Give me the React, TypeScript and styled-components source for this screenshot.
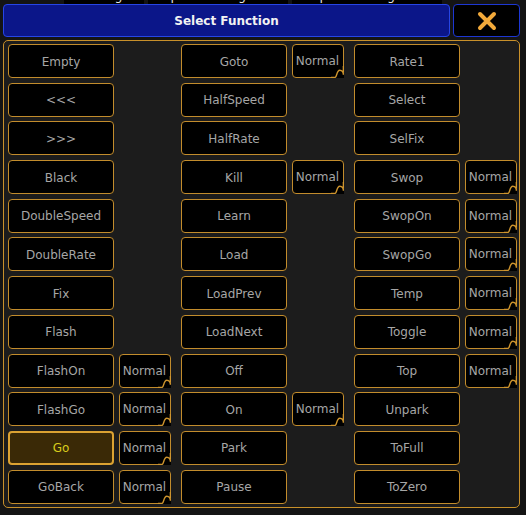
import { Fragment } from "react"
import styled, { createGlobalStyle, css } from "styled-components"

const GlobalStyle = createGlobalStyle`
  html, body {
    margin: 0;
    padding: 0;
    background: #141414;
  }
  body {
    font-family: "DejaVu Sans", Verdana, sans-serif;
  }
`

// hinter dem Dialog: abgeschnittene Kopfzeile der Seite
const Backdrop = styled.div`
  position: relative;
  width: 526px;
  height: 515px;
  overflow: hidden;
  background: #141414;
`

const HeaderStrip = styled.div`
  display: flex;
  gap: 4px;
  height: 4px;
  padding-left: 64px;
  overflow: hidden;
  align-items: flex-end;
`

const HeaderCell = styled.div<{ $w: number }>`
  width: ${(p) => p.$w}px;
  height: 14px;
  flex: none;
  background: #000;
  color: #e8e8e8;
  font-size: 12px;
  line-height: 12px;
  text-align: center;
  white-space: nowrap;
  overflow: hidden;
`

const Dialog = styled.div`
  position: absolute;
  left: 3px;
  top: 4px;
  width: 517px;
  display: flex;
  flex-direction: column;
  gap: 3px;
`

const TitleRow = styled.div`
  display: flex;
  gap: 3px;
  height: 33px;
`

const TitleBar = styled.div`
  flex: 1;
  background: #0b1689;
  border: 1px solid #2645e6;
  border-radius: 4px;
  color: #f2f2f2;
  font-weight: bold;
  font-size: 12px;
  display: flex;
  align-items: center;
  justify-content: center;
`

const CloseButton = styled.div`
  width: 65px;
  background: #000;
  border: 1px solid #1d37d4;
  border-radius: 4px;
  display: flex;
  align-items: center;
  justify-content: center;
`

const Body = styled.div`
  height: 468px;
  box-sizing: border-box;
  background: #1c1c1c;
  border: 1px solid #c8902a;
  border-radius: 5px;
  padding: 3px 4px 0 4px;
  display: flex;
  gap: 10.5px;
`

const Column = styled.div`
  display: grid;
  grid-template-columns: 106px 52px;
  grid-auto-rows: 34px;
  column-gap: 4.5px;
  row-gap: 4.7px;
`

const FnButton = styled.div<{ $active?: boolean }>`
  grid-column: 1;
  box-sizing: border-box;
  background: #000;
  border: 1px solid #c28c2c;
  border-radius: 4px;
  color: #a6a6a6;
  font-size: 12px;
  display: flex;
  align-items: center;
  justify-content: center;
  padding-top: 1px;
  white-space: nowrap;

  ${(p) =>
    p.$active &&
    css`
      background: #3a2906;
      border: 2px solid #dba232;
      color: #d9cc1c;
    `}
`

const ModeButton = styled.div`
  grid-column: 2;
  position: relative;
  box-sizing: border-box;
  background: #000;
  border: 1px solid #c28c2c;
  border-radius: 4px;
  color: #a6a6a6;
  font-size: 12px;
  display: flex;
  align-items: center;
  justify-content: center;
  white-space: nowrap;
`

const Curl = styled.svg`
  position: absolute;
  right: -1px;
  bottom: -1px;
`

type Fn = [string, boolean?]

const columns: Fn[][] = [
  [
    ["Empty"],
    ["<<<"],
    [">>>"],
    ["Black"],
    ["DoubleSpeed"],
    ["DoubleRate"],
    ["Fix"],
    ["Flash"],
    ["FlashOn", true],
    ["FlashGo", true],
    ["Go", true],
    ["GoBack", true],
  ],
  [
    ["Goto", true],
    ["HalfSpeed"],
    ["HalfRate"],
    ["Kill", true],
    ["Learn"],
    ["Load"],
    ["LoadPrev"],
    ["LoadNext"],
    ["Off"],
    ["On", true],
    ["Park"],
    ["Pause"],
  ],
  [
    ["Rate1"],
    ["Select"],
    ["SelFix"],
    ["Swop", true],
    ["SwopOn", true],
    ["SwopGo", true],
    ["Temp", true],
    ["Toggle", true],
    ["Top", true],
    ["Unpark"],
    ["ToFull"],
    ["ToZero"],
  ],
]

function CurlMark() {
  return (
    <Curl width="13" height="12" viewBox="0 0 13 12">
      <rect x="3" y="3" width="10" height="9" fill="#000" />
      <path
        d="M0 11.4 H4 C6 11.4 5.5 4.2 8.8 4.2 C11.2 4.2 12.4 6 12.4 8.8 M12.4 0 V6.5"
        fill="none"
        stroke="#cf952e"
        strokeWidth="1.4"
      />
    </Curl>
  )
}

function CloseIcon() {
  return (
    <svg width="20" height="20" viewBox="0 0 20 20">
      <path d="M3 3 L17 17 M17 3 L3 17" stroke="#f2a93a" strokeWidth="4" strokeLinecap="round" />
    </svg>
  )
}

export default function App() {
  return (
    <Backdrop>
      <GlobalStyle />
      <HeaderStrip>
        <HeaderCell $w={80}>Settings</HeaderCell>
        <HeaderCell $w={140}>Sequence Assignment</HeaderCell>
        <HeaderCell $w={150}>Sequence Assignment</HeaderCell>
      </HeaderStrip>
      <Dialog>
        <TitleRow>
          <TitleBar>Select Function</TitleBar>
          <CloseButton>
            <CloseIcon />
          </CloseButton>
        </TitleRow>
        <Body>
          {columns.map((col, ci) => (
            <Column key={ci}>
              {col.map(([label, mode], ri) => (
                <Fragment key={label}>
                  <FnButton $active={label === "Go"} style={{ gridRow: ri + 1 }}>
                    {label}
                  </FnButton>
                  {mode && (
                    <ModeButton style={{ gridRow: ri + 1 }}>
                      Normal
                      <CurlMark />
                    </ModeButton>
                  )}
                </Fragment>
              ))}
            </Column>
          ))}
        </Body>
      </Dialog>
    </Backdrop>
  )
}
